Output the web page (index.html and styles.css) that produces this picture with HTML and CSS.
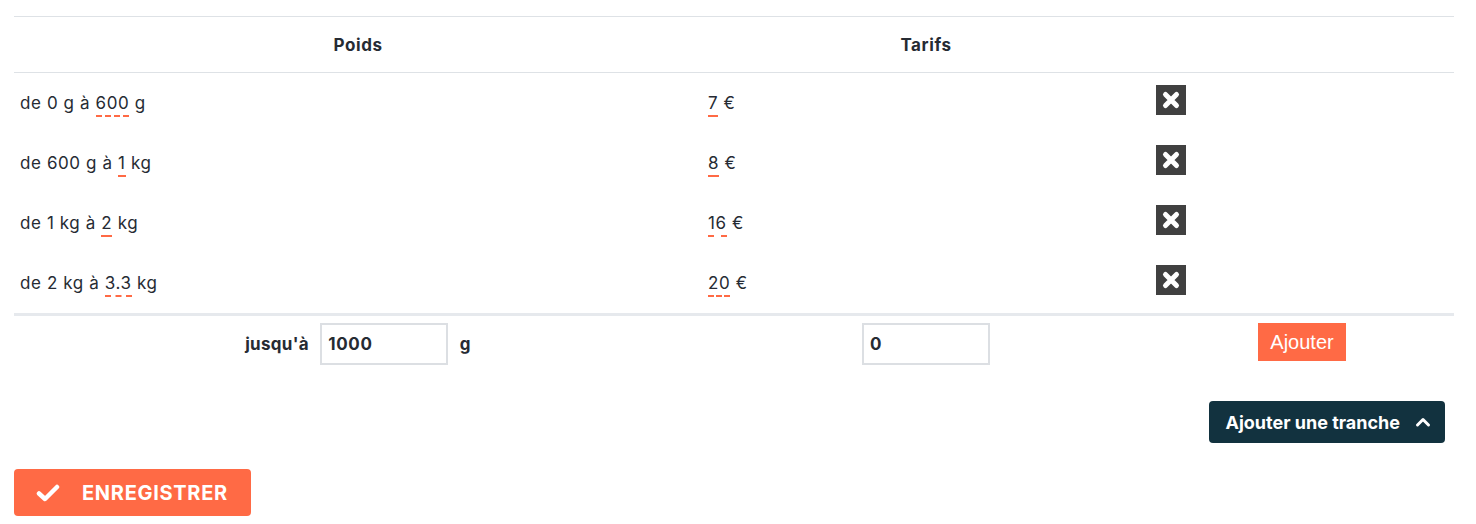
FILE: index.html
```html
<!DOCTYPE html>
<html lang="fr">
<head>
<meta charset="UTF-8">
<title>Tranches de poids</title>
<link rel="stylesheet" href="styles.css">
</head>
<body>

<div class="page">
  <!-- tableau des tranches -->
  <table class="tranches">
    <colgroup>
      <col class="col-poids">
      <col class="col-tarif">
      <col class="col-action">
    </colgroup>
    <thead>
      <tr>
        <th>Poids</th>
        <th>Tarifs</th>
        <th></th>
      </tr>
    </thead>
    <tbody>
      <tr>
        <td>de 0 g à <span class="editable">600</span> g</td>
        <td><span class="editable">7</span> €</td>
        <td><span class="btn-delete"><svg viewBox="0 0 30 30" width="30" height="30"><path d="M9.5 9.5 L20.5 20.5 M20.5 9.5 L9.5 20.5" stroke="#fff" stroke-width="5" stroke-linecap="round"/></svg></span></td>
      </tr>
      <tr>
        <td>de 600 g à <span class="editable">1</span> kg</td>
        <td><span class="editable">8</span> €</td>
        <td><span class="btn-delete"><svg viewBox="0 0 30 30" width="30" height="30"><path d="M9.5 9.5 L20.5 20.5 M20.5 9.5 L9.5 20.5" stroke="#fff" stroke-width="5" stroke-linecap="round"/></svg></span></td>
      </tr>
      <tr>
        <td>de 1 kg à <span class="editable">2</span> kg</td>
        <td><span class="editable">16</span> €</td>
        <td><span class="btn-delete"><svg viewBox="0 0 30 30" width="30" height="30"><path d="M9.5 9.5 L20.5 20.5 M20.5 9.5 L9.5 20.5" stroke="#fff" stroke-width="5" stroke-linecap="round"/></svg></span></td>
      </tr>
      <tr>
        <td>de 2 kg à <span class="editable">3.3</span> kg</td>
        <td><span class="editable">20</span> €</td>
        <td><span class="btn-delete"><svg viewBox="0 0 30 30" width="30" height="30"><path d="M9.5 9.5 L20.5 20.5 M20.5 9.5 L9.5 20.5" stroke="#fff" stroke-width="5" stroke-linecap="round"/></svg></span></td>
      </tr>
    </tbody>
    <tfoot>
      <tr>
        <td class="center">
          <label class="label-bold" for="poids">jusqu'à</label>
          <input type="text" id="poids" class="field" value="1000">
          <span class="label-bold">g</span>
        </td>
        <td class="center">
          <input type="text" class="field" value="0">
        </td>
        <td class="center">
          <button type="button" class="btn-add">Ajouter</button>
        </td>
      </tr>
    </tfoot>
  </table>

  <div class="toggle-row">
    <button type="button" class="btn-toggle">Ajouter une tranche
      <svg viewBox="0 0 16 16" width="16" height="16"><path d="M2.5 11 L8 5.5 L13.5 11" fill="none" stroke="#fff" stroke-width="3" stroke-linecap="round" stroke-linejoin="round"/></svg>
    </button>
  </div>

  <button type="button" class="btn-save">
    <svg viewBox="0 0 24 20" width="24" height="20"><path d="M3 10.5 L9 16 L21 4" fill="none" stroke="#fff" stroke-width="4.5" stroke-linecap="round" stroke-linejoin="round"/></svg>
    ENREGISTRER
  </button>
</div>

</body>
</html>
```

FILE: styles.css
```css
body {
  margin: 0;
  font-family: Inter, "Open Sans", sans-serif;
  font-size: 17px;
  line-height: 20px;
  letter-spacing: 0.6px;
  color: #262b33;
  background: #fff;
}

.page {
  padding: 16px 22px 0 14px;
}

/* tableau */
.tranches {
  width: 1440px;
  border-collapse: collapse;
  table-layout: fixed;
}
.col-poids { width: 688px; }
.col-tarif { width: 448px; }
.col-action { width: 304px; }

.tranches th {
  height: 55px;
  font-weight: 700;
  font-size: 17px;
  text-align: center;
  border-top: 1px solid #dee2e6;
  border-bottom: 1px solid #dee2e6;
  padding: 0;
}

.tranches tbody td {
  height: 60px;
  padding: 0 6px;
  vertical-align: middle;
}

.editable {
  border-bottom: 2px dashed #ff6a45;
  padding-bottom: 2px;
}

.btn-delete {
  display: inline-block;
  width: 30px;
  height: 30px;
  background: #404040;
  vertical-align: middle;
  margin-top: -6px;
}
.btn-delete svg { display: block; }

.tranches tfoot td {
  border-top: 3px solid #e6e9ed;
  padding: 7px 0;
  vertical-align: middle;
}
.center { text-align: center; }

.label-bold {
  font-weight: 700;
  margin: 0 6px;
  letter-spacing: 0.3px;
  vertical-align: middle;
}

.field {
  width: 128px;
  height: 42px;
  box-sizing: border-box;
  border: 2px solid #dcdfe3;
  padding: 0 6px;
  font-family: Inter, "Open Sans", sans-serif;
  font-size: 17px;
  letter-spacing: 0.6px;
  font-weight: 700;
  color: #262b33;
  vertical-align: middle;
}

.btn-add {
  background: #ff6a45;
  color: #fff;
  border: none;
  height: 38px;
  padding: 0 12px;
  margin-top: -4px;
  font-family: "Liberation Sans", Arial, sans-serif;
  font-size: 20px;
  letter-spacing: 0;
  vertical-align: middle;
  cursor: pointer;
}

.toggle-row {
  display: flex;
  justify-content: flex-end;
  margin-top: 29px;
  padding-right: 9px;
}

.btn-toggle {
  display: flex;
  align-items: center;
  gap: 15px;
  height: 42px;
  padding: 0 14px 0 16px;
  background: #12323f;
  color: #fff;
  border: none;
  border-radius: 4px;
  font-family: Inter, "Open Sans", sans-serif;
  font-size: 18px;
  font-weight: 700;
  letter-spacing: 0;
  cursor: pointer;
}

.btn-save {
  display: flex;
  align-items: center;
  gap: 22px;
  margin-top: 26px;
  height: 47px;
  width: 237px;
  padding: 0 22px;
  background: #ff6a45;
  color: #fff;
  border: none;
  border-radius: 4px;
  font-family: Inter, "Open Sans", sans-serif;
  font-size: 20px;
  font-weight: 700;
  letter-spacing: 0.7px;
  cursor: pointer;
}
```
